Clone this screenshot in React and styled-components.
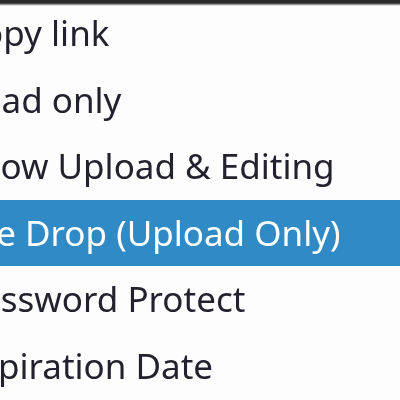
import React from 'react';
import styled, { createGlobalStyle } from 'styled-components';

const GlobalStyle = createGlobalStyle`
  html, body {
    margin: 0;
    padding: 0;
    background: #ffffff;
    overflow: hidden;
  }
`;

const Screen = styled.div`
  position: relative;
  width: 400px;
  height: 400px;
  overflow: hidden;
  background: #fdfdfd;
`;

const TopEdge = styled.div`
  position: absolute;
  top: 0;
  left: 0;
  right: 0;
  height: 6px;
  background: linear-gradient(#2b2b2b 0, #2b2b2b 3px, #6a6a6a 4px, #c8c8c8 5px, #f4f4f4 6px);
  z-index: 2;
`;

const Menu = styled.ul`
  list-style: none;
  margin: 0 0 0 -40px;
  padding: 0;
  width: 480px;
  font-family: "Noto Sans", "Open Sans", sans-serif;
  font-size: 35px;
  filter: blur(0.4px);
`;

const Item = styled.li`
  height: 66.6px;
  line-height: 66.6px;
  padding: 0;
  white-space: nowrap;
  color: ${p => (p.$active ? '#ffffff' : '#22222e')};
  background: ${p => (p.$active ? '#2f8ac6' : 'transparent')};
`;

const items = [
  'Copy link',
  'Read only',
  'Allow Upload & Editing',
  'File Drop (Upload Only)',
  'Password Protect',
  'Expiration Date',
];

const App = () => {
  return (
    <Screen>
      <GlobalStyle />
      <TopEdge />
      <Menu>
        {items.map((label, i) => (
          <Item key={label} $active={i === 3}>
            {label}
          </Item>
        ))}
      </Menu>
    </Screen>
  );
};

export default App;
